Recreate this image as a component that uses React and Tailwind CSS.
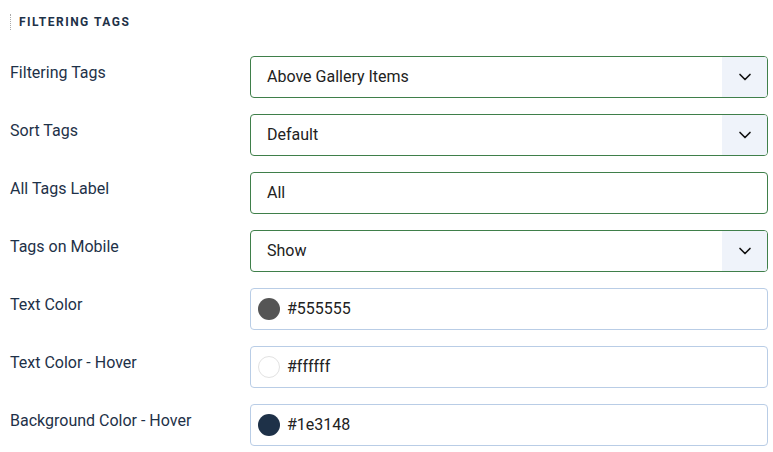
import { ChevronDown } from "lucide-react";

const rows = [
    { label: "Filtering Tags", type: "select", value: "Above Gallery Items" },
    { label: "Sort Tags", type: "select", value: "Default" },
    { label: "All Tags Label", type: "text", value: "All" },
    { label: "Tags on Mobile", type: "select", value: "Show" },
    { label: "Text Color", type: "color", value: "#555555", swatch: "bg-[#555555]" },
    { label: "Text Color - Hover", type: "color", value: "#ffffff", swatch: "bg-white border border-[#e2e2e2]" },
    { label: "Background Color - Hover", type: "color", value: "#1e3148", swatch: "bg-[#1e3148]" },
];

function Field({ row }) {
    if (row.type === "color") {
        return (
            <div className="flex items-center h-[42px] border border-[#b9cde6] rounded-[4px] bg-white pl-[7px]">
                <span className={`w-[22px] h-[22px] rounded-full ${row.swatch}`} />
                <span className="ml-[7px] text-[16px] text-[#222]">{row.value}</span>
            </div>
        );
    }

    return (
        <div className="flex items-center h-[42px] border border-[#3f7f4a] rounded-[4px] bg-white overflow-hidden">
            <span className="flex-1 pl-4 text-[16px] text-[#222]">{row.value}</span>
            {row.type === "select" && (
                <span className="w-[45px] h-full flex items-center justify-center bg-[#eff3fa]">
                    <ChevronDown size={20} strokeWidth={2} className="text-[#111]" />
                </span>
            )}
        </div>
    );
}

export default function App() {
    return (
        <div className="w-[773px] h-[452px] bg-white pl-[10px] pr-[5px] pt-[14px] font-['Roboto',sans-serif]">

            {/* Section heading */}
            <div className="flex items-center h-[16px] border-l border-dotted border-[#aaa] pl-[8px]">
                <h2 className="text-[12px] font-bold tracking-[1.5px] text-[#1e3148] uppercase">
                    Filtering Tags
                </h2>
            </div>

            <div className="mt-[26px] flex flex-col gap-4">
                {rows.map((row) => (
                    <div key={row.label} className="flex">
                        <label className="w-[240px] pt-[5px] text-[16px] text-[#1e3148]">
                            {row.label}
                        </label>
                        <div className="flex-1">
                            <Field row={row} />
                        </div>
                    </div>
                ))}
            </div>

        </div>
    );
}
